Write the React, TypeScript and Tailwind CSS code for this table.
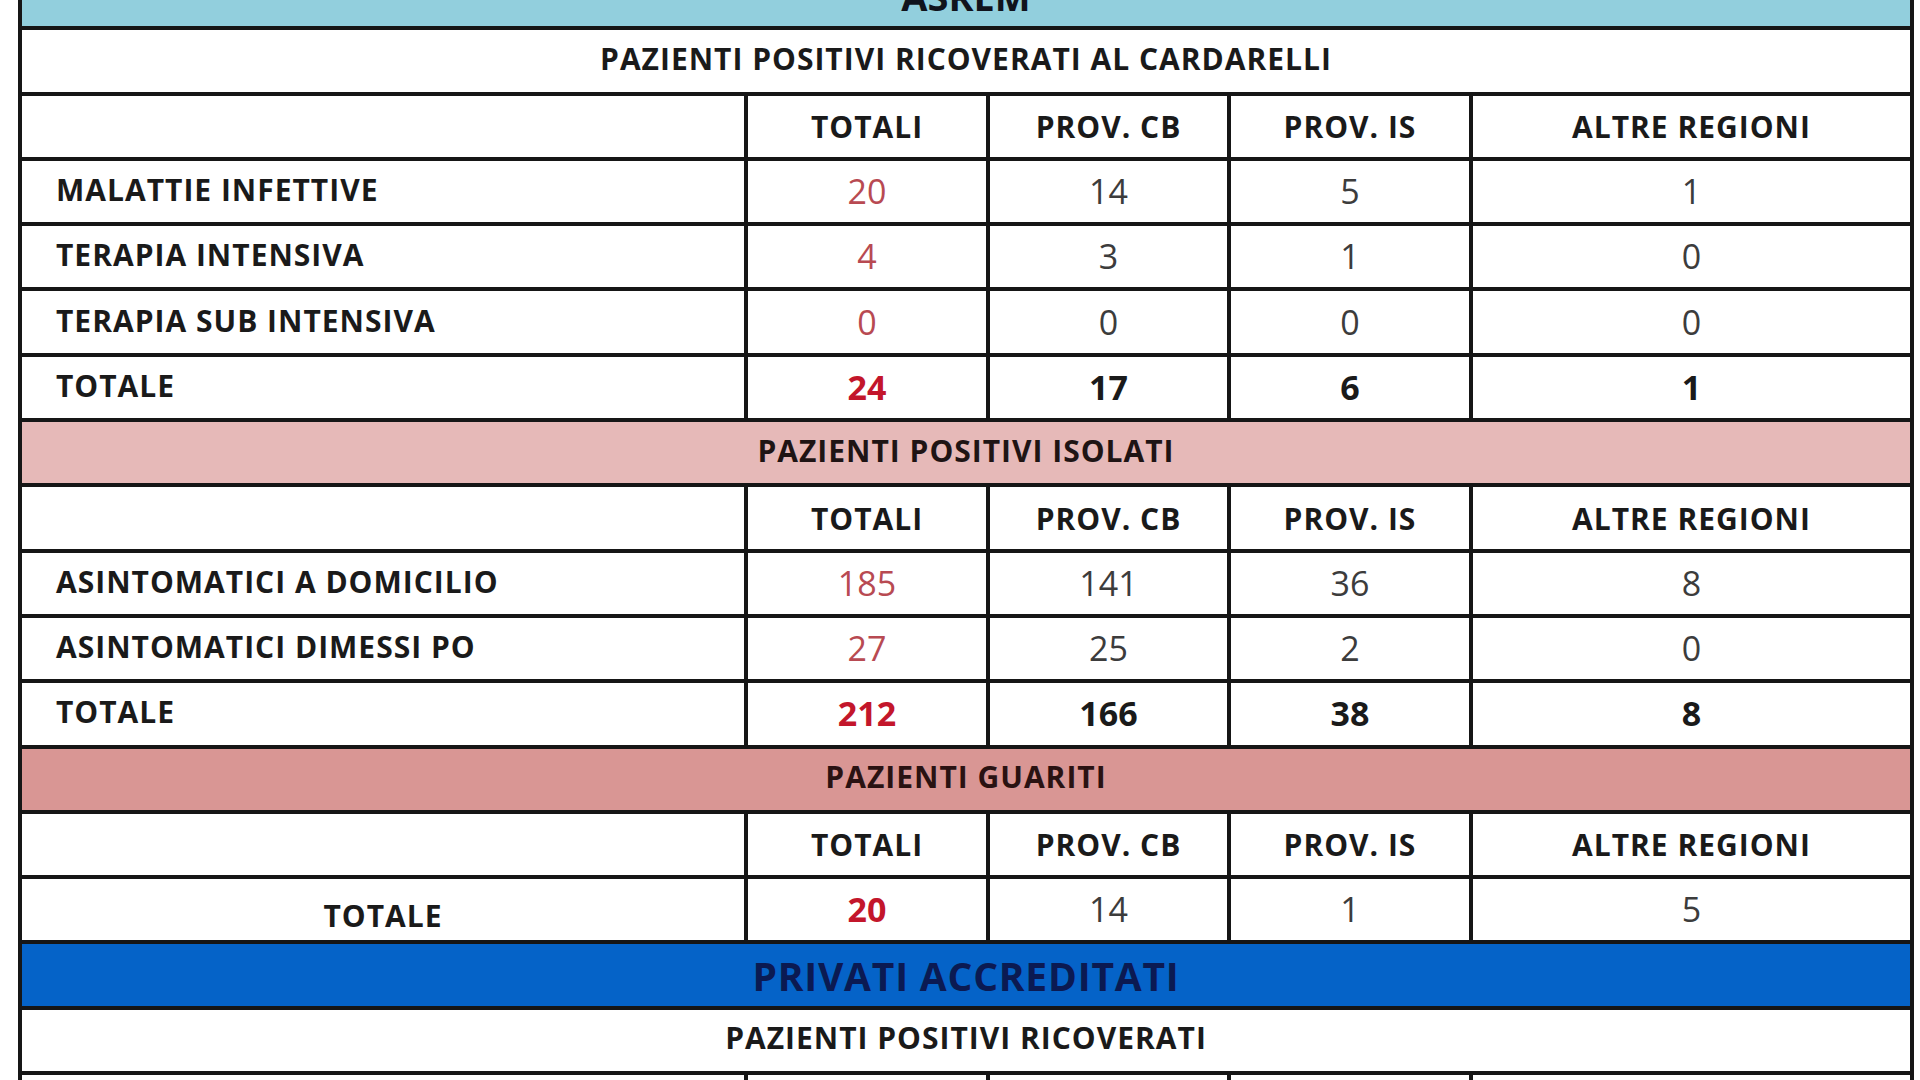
const font = { fontFamily: '"Open Sans", Lato, sans-serif' };

type Row = {
  label: string;
  values: [string, string, string, string];
  bold?: boolean;
  centerLabel?: boolean;
  boldFirstOnly?: boolean;
};

const HEADERS = ['TOTALI', 'PROV. CB', 'PROV. IS', 'ALTRE REGIONI'];

const ricoverati: Row[] = [
  { label: 'MALATTIE INFETTIVE', values: ['20', '14', '5', '1'] },
  { label: 'TERAPIA INTENSIVA', values: ['4', '3', '1', '0'] },
  { label: 'TERAPIA SUB INTENSIVA', values: ['0', '0', '0', '0'] },
  { label: 'TOTALE', values: ['24', '17', '6', '1'], bold: true },
];

const isolati: Row[] = [
  { label: 'ASINTOMATICI A DOMICILIO', values: ['185', '141', '36', '8'] },
  { label: 'ASINTOMATICI DIMESSI PO', values: ['27', '25', '2', '0'] },
  { label: 'TOTALE', values: ['212', '166', '38', '8'], bold: true },
];

const guariti: Row[] = [
  { label: 'TOTALE', values: ['20', '14', '1', '5'], centerLabel: true, boldFirstOnly: true },
];

function Cells({ children, className = '' }: { children: React.ReactNode; className?: string }) {
  return (
    <div className={`flex h-[65.3px] shrink-0 border-b-4 border-[#161616] ${className}`}>{children}</div>
  );
}

function Band({ text, className }: { text: string; className: string }) {
  return (
    <Cells className={`items-center justify-center pb-1 ${className}`}>
      <span className="text-[30px] font-bold leading-none tracking-[1px]">{text}</span>
    </Cells>
  );
}

function HeaderRow() {
  return (
    <Cells>
      <div className="w-[722px] shrink-0" />
      {HEADERS.map((h, i) => (
        <div
          key={h}
          className={`flex items-center justify-center border-l-4 border-[#161616] text-[30px] font-bold text-[#1a1a1a] tracking-[1px] ${
            i === 0 ? 'w-[242px]' : i === 1 ? 'w-[241px]' : i === 2 ? 'w-[242px]' : 'flex-1'
          }`}
        >
          {h}
        </div>
      ))}
    </Cells>
  );
}

function DataRow({ row }: { row: Row }) {
  return (
    <Cells>
      <div
        className={`flex w-[722px] shrink-0 items-center text-[30px] font-bold text-[#1a1a1a] tracking-[1px] ${
          row.centerLabel ? 'justify-center pt-3' : 'pb-1 pl-[34px]'
        }`}
      >
        {row.label}
      </div>
      {row.values.map((v, i) => {
        const bold = row.bold || (row.boldFirstOnly && i === 0);
        const color = i === 0 ? (bold ? 'text-[#c3162b]' : 'text-[#b84a52]') : bold ? 'text-[#1a1a1a]' : 'text-[#3c3c3c]';
        return (
          <div
            key={i}
            className={`flex items-center justify-center border-l-4 border-[#161616] text-[34px] ${
              bold ? 'font-bold' : 'font-normal'
            } ${color} ${i === 0 ? 'w-[242px]' : i === 1 ? 'w-[241px]' : i === 2 ? 'w-[242px]' : 'flex-1'}`}
          >
            {v}
          </div>
        );
      })}
    </Cells>
  );
}

export default function App() {
  return (
    <div className="h-[1080px] w-[1920px] overflow-hidden bg-white" style={font}>
      <div className="ml-[18px] flex w-[1896px] flex-col border-x-4 border-[#161616]">
        {/* ASREM band, cut off at the top */}
        <div className="-mt-[35px] flex h-[65.3px] shrink-0 items-center justify-center border-b-4 border-[#161616] bg-[#92cfdd]">
          <span className="text-[38px] font-bold leading-none text-[#10131c]">ASREM</span>
        </div>

        <Band text="PAZIENTI POSITIVI RICOVERATI AL CARDARELLI" className="bg-white text-[#1a1a1a]" />
        <HeaderRow />
        {ricoverati.map((r) => (
          <DataRow key={r.label} row={r} />
        ))}

        <Band text="PAZIENTI POSITIVI ISOLATI" className="bg-[#e6b9b8] text-[#1f1414]" />
        <HeaderRow />
        {isolati.map((r) => (
          <DataRow key={r.label} row={r} />
        ))}

        <Band text="PAZIENTI GUARITI" className="bg-[#d99694] text-[#2a1212]" />
        <HeaderRow />
        {guariti.map((r) => (
          <DataRow key={r.label} row={r} />
        ))}

        <Cells className="items-center justify-center bg-[#0563c8]">
          <span className="text-[39px] font-bold leading-none text-[#0b1a52] tracking-[0.8px]">PRIVATI ACCREDITATI</span>
        </Cells>
        <Band text="PAZIENTI POSITIVI RICOVERATI" className="bg-white text-[#1a1a1a]" />
        <HeaderRow />
      </div>
    </div>
  );
}
